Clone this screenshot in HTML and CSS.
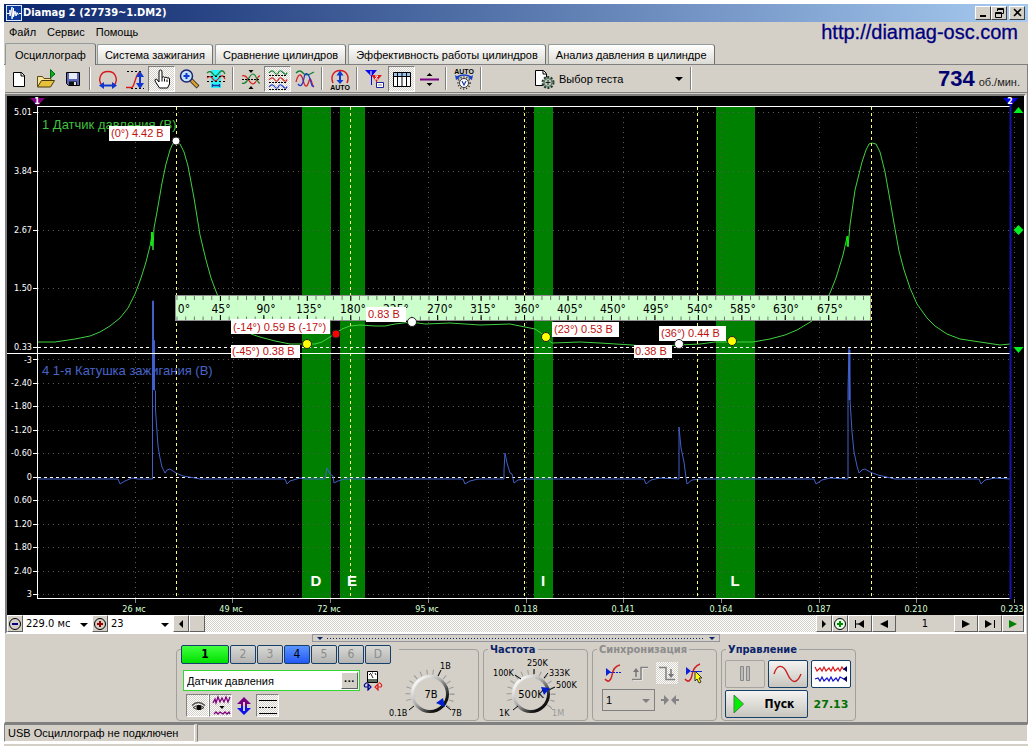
FILE: index.html
```html
<!DOCTYPE html>
<html lang="ru">
<head>
<meta charset="utf-8">
<title>Diamag 2 (27739~1.DM2)</title>
<link rel="stylesheet" href="styles.css">
</head>
<body>
<div class="window">
  <header class="titlebar">
    <svg class="app-icon" width="16" height="16" viewBox="0 0 16 16"><rect width="16" height="16" fill="#dfe8ff"/><rect x="1" y="1" width="14" height="14" fill="#0a3a9c"/><path d="M1 8.500h3V5v6l1-4 1-5v12l1.500-11v9L9 6l1 5 1-3.500 1 2 1-1h2" fill="none" stroke="#fff"/></svg>
    <h1 class="title">Diamag 2 (27739~1.DM2)</h1>
    <button class="win-btn" aria-label="Свернуть"><svg width="11" height="10" viewBox="0 0 11 10"><path d="M2 8h6" stroke="#000" stroke-width="2"/></svg></button>
    <button class="win-btn" aria-label="Восстановить"><svg width="11" height="10" viewBox="0 0 11 10"><path d="M3.500 3V.5h6v5H7.500M3 1.500h7M1.500 4.500h6v5h-6zM1 5.500h7" fill="none" stroke="#000"/></svg></button>
    <button class="win-btn close" aria-label="Закрыть"><svg width="11" height="10" viewBox="0 0 11 10"><path d="M2 1l7 7M9 1L2 8" stroke="#000" stroke-width="1.600"/></svg></button>
  </header>
  <div class="menu-row">
    <nav class="menu"><button>Файл</button><button>Сервис</button><button>Помощь</button></nav>
    <a class="site" href="http://diamag-osc.com">http://diamag-osc.com</a>
  </div>
  <nav class="tabs">
    <button class="tab active">Осциллограф</button><button class="tab">Система зажигания</button><button class="tab">Сравнение цилиндров</button><button class="tab">Эффективность работы цилиндров</button><button class="tab">Анализ давления в цилиндре</button>
  </nav>
  <main class="page">
    <div class="toolbar">
      <button class="tool" aria-label="Новый"><svg width="24" height="22" viewBox="0 0 24 22"><path d="M6.500 4.500h8l3 3v11h-11z" fill="#fff" stroke="#000"/><path d="M14 4v4h4" fill="none" stroke="#000"/></svg></button>
      <button class="tool" aria-label="Открыть"><svg width="24" height="22" viewBox="0 0 24 22"><path d="M3.500 18V8.500h5l1.500 2h7V13" fill="#f6e59a" stroke="#5c4a10"/><path d="M3.500 19L7.500 12.500h13L16.500 19z" fill="#e8c13c" stroke="#4a3a08"/><path d="M16.500 10V1.500L21 6z" fill="#08b020" stroke="#056812"/></svg></button>
      <button class="tool" aria-label="Сохранить"><svg width="24" height="22" viewBox="0 0 24 22"><path d="M5.500 4.500h13v13h-11l-2-2z" fill="#5a66b8" stroke="#000"/><rect x="8" y="5" width="8" height="6" fill="#e8ecf4"/><path d="M8 13.500h8V17H8z" fill="#111"/><path d="M13 14h2v3h-2z" fill="#ddd"/></svg></button>
      <span class="sep"></span>
      <button class="tool" aria-label="Ширина"><svg width="24" height="22" viewBox="0 0 24 22"><path d="M6 17.500C1.500 12 4 3.500 12 3.500S22.500 12 18 17.500" fill="none" stroke="#d81818" stroke-width="1.400"/><path d="M5 17.500h14" stroke="#1038d0" stroke-width="2"/><path d="M3 17.500l5-3.500v7zM21 17.500L16 14v7z" fill="#1038d0"/></svg></button>
      <button class="tool" aria-label="Высота"><svg width="24" height="22" viewBox="0 0 24 22"><path d="M3 19.500h6c3-2 3.500-14 8-15.500h1" fill="none" stroke="#d81818" stroke-width="1.400"/><path d="M4 3.500h16M8 20.500h13" stroke="#000" stroke-dasharray="2 2"/><path d="M17 6v12" stroke="#1038d0" stroke-width="2"/><path d="M17 3l4 6h-8zM17 21l-4-6h8z" fill="#1038d0"/></svg></button>
      <button class="tool pressed" aria-label="Рука"><svg width="24" height="22" viewBox="0 0 24 22"><path d="M9 14V4q0-2 1.500-2T12 4v5.500q2-1.500 2.500 0 2-1 2.500.5 2.500-.8 2.500 1V16l-2 4h-8L5 13q-.5-2 1.500-2z" fill="#fff" stroke="#000"/><path d="M12 9.500v4M14.500 10.500v3M17 11.500V14" stroke="#000"/></svg></button>
      <button class="tool" aria-label="Масштаб"><svg width="24" height="22" viewBox="0 0 24 22"><path d="M14 12l7 7" stroke="#222" stroke-width="4"/><path d="M14 12l6.500 6.500" stroke="#d8a030" stroke-width="2.500"/><circle cx="9.500" cy="8" r="6" fill="#c5e3f6" stroke="#1c2474" stroke-width="1.500"/><path d="M9.500 5v6M6.500 8h6" stroke="#1038d0" stroke-width="2"/></svg></button>
      <button class="tool" aria-label="Область"><svg width="24" height="22" viewBox="0 0 24 22"><path d="M7 2h10v18H7z" fill="#2af2f8"/><path d="M3 5q3.500-3 6 1t6-1 6 1" fill="none" stroke="#168030" stroke-width="1.300"/><path d="M3 10q3.500-3 6 1t6-1 6 1" fill="none" stroke="#d82020" stroke-width="1.300"/><path d="M3 8.500h18M3 13.500h18" stroke="#000" stroke-dasharray="2 2"/><path d="M8 17.500h8M8.500 16v3M15.500 16v3" stroke="#1038a0" stroke-width="1.300"/></svg></button>
      <span class="sep"></span>
      <button class="tool" aria-label="Совместить"><svg width="24" height="22" viewBox="0 0 24 22"><path d="M3 8c5-3 7 8 11 8s4-9 7-8" fill="none" stroke="#d82020" stroke-width="1.200"/><path d="M3 15c5 3 7-9 11-9s4 10 7 9" fill="none" stroke="#168030" stroke-width="1.200"/><path d="M3 11.500h18" stroke="#000" stroke-dasharray="2 1"/><path d="M9.500 2h5L12 5zM9.500 21h5L12 18z" fill="#000"/></svg></button>
      <button class="tool pressed" aria-label="Разделить"><svg width="24" height="22" viewBox="0 0 24 22"><g fill="none" stroke-width="1.200"><path d="M3 5q3-4 5.500-.5t4 0 4.500 0 4 0" stroke="#168030"/><path d="M3 12q3-4 5.500-.5t4 0 4.500 0 4 0" stroke="#d82020"/><path d="M3 19q3-4 5.500-.5t4 0 4.500 0 4 0" stroke="#2038d0"/></g><path d="M3 7.500h18M3 14.500h18M3 21.500h18" stroke="#000" stroke-dasharray="2 1"/></svg></button>
      <button class="tool" aria-label="Наложить"><svg width="24" height="22" viewBox="0 0 24 22"><g fill="none" stroke-width="1.300"><path d="M3 5q4-4 7 0t11-1" stroke="#168030"/><path d="M3 14c2-8 5-10 7-2s4 8 6 1 3 6 5 6" stroke="#d82020"/><path d="M5 16c3 4 5 0 6-6s4-6 6 1 2 8 4 7" stroke="#2038d0"/></g></svg></button>
      <span class="sep"></span>
      <button class="tool" aria-label="Авто"><svg width="24" height="22" viewBox="0 0 24 22"><path d="M5 15C2 8 6 2.500 12 2.500S22 8 19 15" fill="none" stroke="#d81818" stroke-width="1.400"/><path d="M12 5v9" stroke="#1038d0" stroke-width="2"/><path d="M12 2.500l3.500 5h-7zM12 16l-3.500-4h7z" fill="#1038d0"/><text x="12" y="21.500" class="icon-text">AUTO</text></svg></button>
      <span class="sep"></span>
      <button class="tool" aria-label="Маркеры"><svg width="24" height="22" viewBox="0 0 24 22"><path d="M2 2h12L9 8v9H8V8z" fill="#0808f0"/><path d="M8 7h11l-5 6v4h-1v-4z" fill="#e01818"/><path d="M8 3v4" stroke="#fff"/><path d="M12 8h3l-3 3h3" stroke="#fff" fill="none"/><path d="M13.500 14.500h7v5h-7z" fill="#fff" stroke="#2020a0"/><path d="M15 17h4" stroke="#888"/></svg></button>
      <button class="tool pressed" aria-label="Таблица"><svg width="24" height="22" viewBox="0 0 24 22"><path d="M3.500 4.500h17v14h-17z" fill="#fff" stroke="#000"/><path d="M4 5h16v3H4z" fill="#9bc4ec"/><path d="M3 8.500h18M7.500 5v13M12 5v13M16.500 5v13" stroke="#000"/></svg></button>
      <button class="tool" aria-label="Линейка"><svg width="24" height="22" viewBox="0 0 24 22"><path d="M3 11.500h19" stroke="#780080" stroke-width="2"/><path d="M9.500 8h6l-3-3zM9.500 15h6l-3 3z" fill="#000"/></svg></button>
      <span class="sep"></span>
      <button class="tool" aria-label="Авторазвёртка"><svg width="24" height="22" viewBox="0 0 24 22"><text x="12" y="5.500" class="icon-text">AUTO</text><path d="M5 9q7-4 14 0" fill="none" stroke="#1840c0" stroke-width="1.500"/><path d="M3 7l1 5 4-2zM21 7l-1 5-4-2z" fill="#1840c0"/><circle cx="12" cy="15" r="6" fill="none" stroke="#222" stroke-width="1.500" stroke-dasharray="1 2"/><circle cx="12" cy="15" r="4.500" fill="#fff" stroke="#333"/><path d="M10 13l2 4 2-4" fill="none" stroke="#2038b0" stroke-width="1.200"/></svg></button>
      <span class="sep"></span>
      <button class="test-select"><svg width="24" height="22" viewBox="0 0 24 22"><path d="M3.500 2.500h8l3 3v12h-11z" fill="#fff" stroke="#000"/><path d="M11 3v3h3" fill="none" stroke="#000"/><circle cx="16" cy="14.500" r="5.500" fill="#a9bfae" stroke="#24382a" stroke-width="2" stroke-dasharray="2 1.500"/><circle cx="16" cy="14.500" r="4" fill="#bccdc0" stroke="#516a58"/><path d="M16 12v5M13.500 14.500h5" stroke="#222"/></svg><span>Выбор теста</span><i class="caret"></i></button>
      <span class="sep"></span>
      <p class="rpm"><strong>734</strong> об./мин.</p>
    </div>
    <section class="scope">
      <svg class="chart" viewBox="7 96 1017 519" role="img" aria-label="Осциллограмма">
        <rect x="7" y="96" width="1017" height="519" fill="#000"/>
        <g fill="#008000"><path d="M302 107h29v491h-29zM340 107h25v491h-25zM534 107h19v491h-19zM716 107h39v491h-39z"/></g>
        <g class="grid">
          <path d="M38 112.500h972M38 171.500h972M38 230.500h972M38 288.500h972M38 359.500h972M38 383.500h972M38 406.500h972M38 430.500h972M38 453.500h972M38 500.500h972M38 524.500h972M38 547.500h972M38 571.500h972M38 594.500h972"/>
          <path d="M135.500 112v486M232.500 112v486M330.500 112v486M428.500 112v486M526.500 112v486M623.500 112v486M721.500 112v486M819.500 112v486M916.500 112v486M1014.500 112v486"/>
        </g>
        <path d="M38 347.500h972M38 477.500h972" stroke="#fff" stroke-dasharray="3 3"/>
        <text class="name ch1" x="42" y="129">1 Датчик давления (В)</text>
        <text class="name ch4" x="42" y="375">4 1-я Катушка зажигания (В)</text>
        <path class="wave" stroke="#40d040" d="M38 342L55 342 75 339 90 336 100 332 110 326 120 318 128 308 135 294 141 278 146 262 150 246 152 235 153 250 154 228 157 212 162 183 166 164 170 150 173 143 176 141 180 144 184 152 188 166 194 198 200 235 206 260 211 278 217 294 226 311 235 322 251 334 260 337 275 341 290 344 307 344 315 344 322 342 330 337 336 333 342 329 350 326 360 325 375 326 385 326 395 324 411 322 425 324 450 323 480 325 510 324 525 327 535 329 541 333 546 338 552 343 580 342 600 343 632 345 650 347 679 345 700 344 715 342 733 342 753 342 770 339 785 335 797 330 812 321 823 306 830 293 836 278 843 255 847 237 848 247 850 225 855 190 862 162 866 150 869 144 872 143 876 144 880 152 885 172 890 200 895 229 899 251 904 270 910 288 917 304 927 318 935 326 947 334 960 339 980 342 1000 345 1010 344"/>
        <path d="M152 232v14M847.500 236v10" stroke="#00f000" stroke-width="2"/>
        <path class="wave" stroke="#4060c8" d="M38 479H118L120 484 125 481 132 478 138 479H152.500V301L153.500 301V340L154.500 341V390L155.500 391V410L157 432 158 446 160 458 162 467 165 473 167 470 170 469 173 471 176 473 183 476 195 478 200 479H285L287 484 290 481 300 478 305 479H325L327 468 330 474 333 476 334 483 338 481 345 479H463L465 484 470 481 478 479H504V470L505 453 507 463 510 473 512 474 514 483 518 480 525 479H644L646 484 651 480 660 478 679 479V427L681 448 684 462 686 478 687 484 692 480 700 479H814L816 484 822 480 830 478 848 479V390L849 348 850 400 852 432 854 452 857 466 859 473 862 470 865 469 870 472 878 475 895 479H979L981 484 985 480 995 478 1010 479"/>
        <path d="M153.500 340v50M849.500 350v50" stroke="#4060d0" stroke-width="2"/>
        <path d="M176.500 107v491M350.500 107v491M524.500 107v491M697.500 107v491M871.500 107v491" stroke="#ffff70" stroke-dasharray="3 3"/>
        <path d="M37 106.500h973M7 353.500h1003M37 598.500h973M33 112.500h4M33 171.500h4M33 230.500h4M33 288.500h4M33 347.500h4M33 359.500h4M33 383.500h4M33 406.500h4M33 430.500h4M33 453.500h4M33 477.500h4M33 500.500h4M33 524.500h4M33 547.500h4M33 571.500h4M33 594.500h4M37.500 106v493" stroke="#fff" stroke-width="1"/>
        <path d="M135.500 599v4M232.500 599v4M330.500 599v4M428.500 599v4M526.500 599v4M623.500 599v4M721.500 599v4M819.500 599v4M916.500 599v4M1014.500 599v4" stroke="#888"/>
        <path d="M1010.500 104v495" stroke="#1414a8" stroke-width="2"/>
        <path d="M30 98h15l-7.500 8z" fill="#800080"/><path d="M1003 98h15l-7.500 8z" fill="#0000e0"/>
        <text class="marker" x="37" y="104">1</text><text class="marker" x="1010" y="104">2</text>
        <path d="M1018.500 107l5 6h-10zM1018.500 225l5 5-5 5-5-5zM1013.500 347h10l-5 6z" fill="#00f020"/>
        <g class="ylab"><text x="32" y="115">5.01</text><text x="32" y="174">3.84</text><text x="32" y="233">2.67</text><text x="32" y="291">1.50</text><text x="32" y="350">0.33</text><text x="32" y="363">-3</text><text x="32" y="386">-2.40</text><text x="32" y="409">-1.80</text><text x="32" y="433">-1.20</text><text x="32" y="456">-0.60</text><text x="32" y="480">0</text><text x="32" y="503">0.60</text><text x="32" y="527">1.20</text><text x="32" y="550">1.80</text><text x="32" y="574">2.40</text><text x="32" y="597">3</text></g>
        <g class="xlab"><text x="134" y="612">26 мс</text><text x="231" y="612">49 мс</text><text x="329" y="612">72 мс</text><text x="427" y="612">95 мс</text><text x="526" y="612">0.118</text><text x="623" y="612">0.141</text><text x="721" y="612">0.164</text><text x="819" y="612">0.187</text><text x="916" y="612">0.210</text><text x="1012" y="612">0.233</text></g>
        <g class="zone"><text x="316" y="586">D</text><text x="352" y="586">E</text><text x="543" y="586">I</text><text x="735" y="586">L</text></g>
        <rect x="175.500" y="295.500" width="695" height="25" fill="#ccffcc" stroke="#909090"/>
        <path d="M176.500 298H870M176.500 318.500H870" stroke="#777" stroke-width="4" stroke-dasharray="1 7.690"/>
        <path d="M219.900 298.500H870M219.900 317.500H870" stroke="#000" stroke-width="5" stroke-dasharray="1 42.450"/>
        <g class="deg"><text x="184" y="313">0°</text><text x="221" y="313">45°</text><text x="266" y="313">90°</text><text x="309" y="313">135°</text><text x="353" y="313">180°</text><text x="396" y="313">225°</text><text x="440" y="313">270°</text><text x="483" y="313">315°</text><text x="527" y="313">360°</text><text x="570" y="313">405°</text><text x="613" y="313">450°</text><text x="656" y="313">495°</text><text x="700" y="313">540°</text><text x="743" y="313">585°</text><text x="786" y="313">630°</text><text x="830" y="313">675°</text></g>
        <path d="M109 126h61v15h-61zM231 319h99v15h-99zM231 345h69v13h-69zM366 307h40v15h-40zM552 322h67v15h-67zM659 326h67v15h-67zM634 345h38v13h-38z" fill="#fff"/>
        <g class="val"><text x="111" y="137">(0°) 4.42 В</text><text x="233" y="331">(-14°) 0.59 В (-17°)</text><text x="232" y="355">(-45°) 0.38 В</text><text x="368" y="318">0.83 В</text><text x="554" y="333">(23°) 0.53 В</text><text x="661" y="337">(36°) 0.44 В</text><text x="635" y="355">0.38 В</text></g>
        <g stroke="#222"><circle cx="176" cy="141" r="4" fill="#fff"/><circle cx="412" cy="322" r="4.500" fill="#fff"/><circle cx="679" cy="344" r="4.500" fill="#fff"/><circle cx="307" cy="344" r="4.500" fill="#ff0"/><circle cx="546" cy="337" r="4.500" fill="#ff0"/><circle cx="732" cy="341" r="4.500" fill="#ff0"/><circle cx="336" cy="334" r="4" fill="#f00"/></g>
      </svg>
      <div class="scrollrow">
        <button class="sq" aria-label="Уменьшить"><svg width="14" height="14" viewBox="0 0 14 14"><circle cx="7" cy="7" r="5.500" fill="none" stroke="#000"/><path d="M4 7h6" stroke="#000080" stroke-width="2"/></svg></button>
        <span class="combo time"><select aria-label="Время"><option>229.0 мс</option></select></span>
        <button class="sq" aria-label="Увеличить"><svg width="14" height="14" viewBox="0 0 14 14"><circle cx="7" cy="7" r="5.500" fill="none" stroke="#000"/><path d="M4 7h6M7 4v6" stroke="#900" stroke-width="2"/></svg></button>
        <span class="combo count"><select aria-label="Деление"><option>23</option></select></span>
        <button class="sq" aria-label="Влево"><svg width="14" height="14" viewBox="0 0 14 14"><path d="M9 3v8L5 7z"/></svg></button>
        <button class="sq" aria-label="Ползунок"></button>
        <span class="track"></span>
        <button class="sq" aria-label="Вправо"><svg width="14" height="14" viewBox="0 0 14 14"><path d="M5 3v8l4-4z"/></svg></button>
        <button class="sq" aria-label="Добавить"><svg width="14" height="14" viewBox="0 0 14 14"><circle cx="7" cy="7" r="5.500" fill="#e8ffe8" stroke="#000"/><path d="M4 7h6M7 4v6" stroke="#080" stroke-width="2"/></svg></button>
        <button class="nav" aria-label="В начало"><svg width="14" height="14" viewBox="0 0 14 14"><path d="M2 3h1v8H2zM11 3v8L5 7z"/><path d="M3 6.500h3v1H3z"/></svg></button>
        <button class="nav" aria-label="Назад"><svg width="14" height="14" viewBox="0 0 14 14"><path d="M11 3v8L3 7z"/></svg></button>
        <output class="frame-no">1</output>
        <button class="nav" aria-label="Вперёд"><svg width="14" height="14" viewBox="0 0 14 14"><path d="M3 3v8l8-4z"/></svg></button>
        <button class="nav" aria-label="В конец"><svg width="14" height="14" viewBox="0 0 14 14"><path d="M11 3h1v8h-1zM2 3v8l7-4z"/></svg></button>
        <button class="nav last" aria-label="Воспроизвести"><svg width="14" height="14" viewBox="0 0 14 14"><path d="M3 3v8l8-4z" fill="#008000"/></svg></button>
      </div>
    </section>
    <div class="splitter"><i class="caret navy"></i><span class="dots"></span><i class="caret navy"></i></div>
    <section class="panels">
      <fieldset class="group channels">
        <legend class="chan-row"><button class="chan c1">1</button><button class="chan">2</button><button class="chan">3</button><button class="chan c4">4</button><button class="chan">5</button><button class="chan">6</button><button class="chan">D</button></legend>
        <div class="chan-body">
          <div class="chan-left">
            <div class="name-row">
              <span class="sensor"><input aria-label="Датчик" value="Датчик давления"><button aria-label="Выбрать">···</button></span>
              <svg width="20" height="21" viewBox="0 0 20 21"><path d="M4.500 1.500h10v11h-10z" fill="#fff" stroke="#000"/><path d="M5 9h9v3H5z" fill="#5d6d5d"/><path d="M6 5l2-2M9 3h1M12 3l1 2M8 4l2 4" stroke="#222" fill="none"/><path d="M4 12.500q-4 2-2 4.500h4M5 14v6l3-3z" fill="none" stroke="#000090" stroke-width="1.200"/><path d="M16 12.500q4 2 2 4.500h-4M15 14v6l-3-3z" fill="none" stroke="#e02020" stroke-width="1.200"/></svg>
            </div>
            <div class="mode-row">
              <button class="mode on" aria-label="Показать"><svg width="22" height="22" viewBox="0 0 22 22"><path d="M5 10.500q6-6 13 0" fill="none" stroke="#555" stroke-width="1.500"/><path d="M6 12.500q6-4 11 0-5 4-11 0" fill="#ddd" stroke="#333"/><circle cx="12" cy="12.500" r="2.500"/></svg></button>
              <button class="mode on" aria-label="Фильтр"><svg width="22" height="22" viewBox="0 0 22 22"><path d="M3 8l2-4 1 4 2-6 2 5 2-4 2 4 2-5 2 5 2-5M4 19l2-2 2 2 2-2 3 2 2-2 2 2 2-2 1 2" fill="none" stroke="#800080" stroke-width="1.300"/><path d="M9.500 11h5l-2.500 3z"/></svg></button>
              <button class="mode" aria-label="Инверсия"><svg width="22" height="22" viewBox="0 0 22 22"><path d="M11 2l7 7h-4v3H8V9H4z" fill="#780080"/><path d="M11 20l7-7h-4v-2H8v2H4z" fill="#1010e8"/><path d="M11 7v9" stroke="#d4d0c8" stroke-width="2"/></svg></button>
              <button class="mode on" aria-label="Уровни"><svg width="22" height="22" viewBox="0 0 22 22"><path d="M2 5.500h18M2 18.500h18" stroke="#000"/><path d="M2 12.500h18" stroke="#000" stroke-dasharray="2 1"/></svg></button>
            </div>
          </div>
          <svg class="knob" width="86" height="62" viewBox="386 657 86 62">
            <g id="dial"><circle cx="428" cy="694" r="22" fill="none" stroke="#999" stroke-width="5" stroke-dasharray="1 5.250" pathLength="138"/><path d="M404 702l2 10 9 9h26l10-12z" fill="#d4d0c8"/>
            <circle cx="428" cy="694" r="17.500" fill="#d4d0c8" stroke="url(#rim)" stroke-width="3"/></g>
            <defs><linearGradient id="rim" x1="0" y1="0" x2="1" y2="1"><stop offset=".1" stop-color="#fff"/><stop offset=".45" stop-color="#aaa"/><stop offset=".8" stop-color="#111"/></linearGradient></defs>
            <path d="M436 676l3-6M412 706l-5 4M444 706l5 4" stroke="#000"/><path d="M434 703l7-5 2 9z" fill="#0020d0"/>
            <text class="knob-val" x="429" y="698">7В</text>
            <g class="knob-lab"><text x="438" y="669">1В</text><text x="387" y="716">0.1В</text><text x="449" y="716">7В</text></g>
          </svg>
        </div>
      </fieldset>
      <fieldset class="group freq">
        <legend>Частота</legend>
        <svg class="knob" width="98" height="62" viewBox="487 657 98 62">
          <use href="#dial" x="103"/>
          <path d="M515 675l6 4M534 669v5M548 673l-4 5M555 687l-6 3M518 706l-5 4" stroke="#000"/><path d="M549 706l4 4" stroke="#999"/><path d="M541 687l9 1-6 7z" fill="#0020d0"/>
          <text class="knob-val" x="531" y="698">500K</text>
          <g class="knob-lab"><text x="527" y="666">250K</text><text x="493" y="676">100K</text><text x="549" y="676">333K</text><text x="556" y="688">500K</text><text x="499" y="716">1K</text><text x="552" y="716" fill="#999">1M</text></g>
        </svg>
      </fieldset>
      <fieldset class="group sync">
        <legend>Синхронизация</legend>
        <div class="sync-row">
          <button class="sync-btn" aria-label="Канал"><svg width="22" height="22" viewBox="0 0 22 22"><path d="M3 17c3 4 6 2 7-4s3-9 8-10" fill="none" stroke="#d02020" stroke-width="1.500"/><path d="M4 6v8l5-4z" fill="#1020d8"/><path d="M8 10.500h11" stroke="#1020d8" stroke-dasharray="2 1"/></svg></button>
          <button class="sync-btn" aria-label="Фронт"><svg width="22" height="22" viewBox="0 0 22 22"><path d="M4 18.500h9v-12h6" fill="none" stroke="#fff"/><path d="M3 17.500h9v-12h7" fill="none" stroke="#808080" stroke-width="1.500"/><path d="M7 8v7" stroke="#777" stroke-width="1.500"/><path d="M4 10l3-4 3 4z" fill="#777"/></svg></button>
          <button class="sync-btn on" aria-label="Спад"><svg width="22" height="22" viewBox="0 0 22 22"><path d="M3 5.500h7v12h9" fill="none" stroke="#808080" stroke-width="1.500"/><path d="M15 7v7" stroke="#777" stroke-width="1.500"/><path d="M12 12l3 4 3-4z" fill="#777"/></svg></button>
          <button class="sync-btn" aria-label="Выбор"><svg width="22" height="22" viewBox="0 0 22 22"><path d="M2 17c3 4 6 2 7-4s3-9 8-11" fill="none" stroke="#d02020" stroke-width="1.500"/><path d="M3 5v8l5-4z" fill="#1020d8"/><path d="M8 9.500h11" stroke="#1020d8"/><path d="M12 9l7 7h-3l2 4-2 1-2-4-2 2z" fill="#ff0" stroke="#333"/></svg></button>
        </div>
        <div class="sync-row two"><span class="combo sync-ch"><select aria-label="Канал синхронизации" disabled><option>1</option></select></span><svg width="18" height="12" viewBox="0 0 18 12"><path d="M0 5h3V1l5 5-5 5V7H0zM18 5h-3V1l-5 5 5 5V7h3z" fill="#848484"/></svg></div>
      </fieldset>
      <fieldset class="group control">
        <legend>Управление</legend>
        <div class="control-grid">
          <button class="xp off" aria-label="Пауза"><svg width="16" height="16" viewBox="0 0 16 16"><path d="M3.500.5h3v14h-3zM9.500.5h3v14h-3z" fill="#bbb" stroke="#888"/></svg></button>
          <button class="xp" aria-label="Синус"><svg width="32" height="22" viewBox="0 0 32 22"><path d="M2 11C5 1 11 1 15 10s9 13 14 1" fill="none" stroke="#c82020" stroke-width="1.400"/></svg></button>
          <button class="xp white" aria-label="Сигналы"><svg width="36" height="22" viewBox="0 0 36 22"><path d="M2 4l2 4 3-3 2 3 2-4 2 4 3-3 2 3 2-4 2 4 3-3 2 3 2-4 2 3" fill="none" stroke="#d81818" stroke-width="1.200"/><path d="M2 16l3-1 2 3 2-4 2 4 3-3 2 3 2-4 2 4 3-3 2 3 2-4 4 2" fill="none" stroke="#1010c8" stroke-width="1.200"/><path d="M34 3v6l-4-3zM34 13v6l-4-3z" fill="#000060"/></svg></button>
          <button class="xp start"><svg width="12" height="20" viewBox="0 0 12 20"><path d="M1 1l9.500 9L1 19z" fill="#00f000" stroke="#4b804b"/></svg><span>Пуск</span></button>
          <output class="elapsed">27.13</output>
        </div>
      </fieldset>
    </section>
  </main>
  <footer class="status"><span class="msg">USB Осциллограф не подключен</span><span class="rest"></span></footer>
</div>
</body>
</html>
```
FILE: styles.css
```css
* { box-sizing: border-box; }
body { margin: 0; padding: 4px 4px 0; background: #fff; color: #000; font: 11px/14px "Liberation Sans", Arial, sans-serif; }
button, select, input { margin: 0; padding: 0; border: 0; border-radius: 0; background: none; color: inherit; font: inherit; }
button { display: inline-flex; align-items: center; justify-content: center; flex: none; }
svg { display: block; flex: none; }
.window { background: #d4d0c8; min-height: 742px; display: flex; flex-direction: column; }

.titlebar { height: 18px; display: flex; align-items: center; padding: 0 3px 0 2px; background: linear-gradient(90deg, #0a246a, #a6caf0); }
.title { flex: 1; margin: 0 0 0 1px; color: #fff; font: bold 11px/16px "DejaVu Sans Condensed", "DejaVu Sans", sans-serif; }
.win-btn { width: 16px; height: 14px; background: #d4d0c8; border: 1px solid; border-color: #fff #404040 #404040 #fff; }
.close { margin-left: 2px; }

.menu-row { height: 21px; display: flex; justify-content: space-between; }
.menu { display: flex; gap: 11px; padding: 0 0 2px 5px; }
.site { margin-right: 10px; color: #000080; font: 20px/20px "Liberation Sans", Arial, sans-serif; text-decoration: none; -webkit-text-stroke: 0.3px #000080; }

.tabs { height: 22px; display: flex; align-items: flex-end; gap: 2px; padding-left: 1px; border-bottom: 1px solid #808080; }
.tab { height: 20px; padding: 0 7px; background: linear-gradient(#fff, #dcdad4); border: 1px solid #919b9c; border-right-color: #707070; border-bottom: 0; border-radius: 2px 3px 0 0; }
.tab.active { height: 22px; padding: 0 9px; margin: 0 -1px -1px 0; background: #d4d0c8; }

.page { border: 1px solid #fff; border-width: 0 1px; border-right-color: #808080; border-bottom: 2px solid #808080; flex: 1; }
.toolbar { height: 28px; display: flex; align-items: center; border-bottom: 1px solid #808080; }
.tool { width: 27px; height: 26px; }
.pressed, .on { border: 1px solid; border-color: #808080 #fff #fff #808080; background: repeating-conic-gradient(#fff 0 25%, #d4d0c8 0 50%) 0 0 / 2px 2px; }
.sep { width: 2px; height: 23px; margin: 0 3px; background: linear-gradient(90deg, #808080 50%, #fff 50%); flex: none; }
.icon-text { font: bold 7px "Liberation Sans", sans-serif; text-anchor: middle; }
.test-select { width: 155px; margin-left: 47px; justify-content: flex-start; gap: 3px; }
.caret { width: 0; height: 0; border: 4px solid transparent; border-top-color: #000; border-bottom: 0; flex: none; }
.test-select .caret { margin: 0 4px 0 auto; }
.rpm { margin: 0 7px 0 auto; color: #222; display: flex; align-items: baseline; gap: 4px; }
.rpm strong { color: #000070; font: bold 22px/26px "Liberation Sans", Arial, sans-serif; }

.scope { border: 2px solid; border-color: #808080 #fff #fff #808080; margin: 1px 1px 0 0; }
.chart { width: 100%; height: auto; }
.grid { stroke: #585858; stroke-dasharray: 1 4; }
.wave { fill: none; stroke-width: 1; }
.name { font: 13px "Liberation Sans", Arial, sans-serif; }
.ch1 { fill: #40c040; }
.ch4 { fill: #4864c8; }
.marker { fill: #fff; font: bold 8px "DejaVu Sans", sans-serif; text-anchor: middle; }
.ylab { fill: #fff; font: 9px "DejaVu Sans Condensed", sans-serif; text-anchor: end; }
.xlab { fill: #d4ffd4; font: 9px "DejaVu Sans Condensed", sans-serif; text-anchor: middle; }
.zone { fill: #fff; font: bold 15px "Liberation Sans", Arial, sans-serif; text-anchor: middle; }
.deg { font: 12px "DejaVu Sans Condensed", sans-serif; text-anchor: middle; }
.val { fill: #c01010; font: 11px "Liberation Sans", Arial, sans-serif; }

.scrollrow { height: 17px; display: flex; background: #d4d0c8; font-family: "DejaVu Sans Condensed", "DejaVu Sans", sans-serif; }
.sq, .nav { width: 16px; background: #d4d0c8; border: 1px solid; border-color: #fff #606060 #606060 #fff; }
.nav { width: 24px; }
.nav.last { width: 22px; }
.combo { position: relative; display: flex; background: #fff; }
.combo::after { content: ""; position: absolute; right: 4px; top: 50%; border: 4px solid transparent; border-top-color: #000; border-bottom: 0; margin-top: -1px; pointer-events: none; }
.combo select { appearance: none; width: 100%; padding-left: 3px; opacity: 1; color: #000; }
.time { width: 69px; }
.count { width: 65px; }
.track { flex: 1; background: repeating-conic-gradient(#fff 0 25%, #d4d0c8 0 50%) 0 0 / 2px 2px; }
.frame-no { width: 58px; text-align: center; line-height: 17px; }

.splitter { width: 408px; height: 8px; margin: 0 auto; display: flex; align-items: center; gap: 4px; padding: 0 4px; border: 1px solid #9494a0; }
.navy { border-top-color: #0a246a; border-width: 3px 3px 0; }
.dots { flex: 1; height: 1px; background: repeating-linear-gradient(90deg, #0a246a 0 1px, transparent 1px 3px); }

.panels { display: flex; align-items: flex-start; gap: 4px; padding: 3px 0 1px 171px; }
.group { height: 76px; margin: 0; padding: 0; min-width: 0; border: 1px solid #a0a09c; border-radius: 4px; }
.group legend { margin-left: 4px; padding: 0 2px; color: #0a246a; font: bold 11px/9px "DejaVu Sans Condensed", "DejaVu Sans", sans-serif; }
.group .chan-row { display: flex; align-items: flex-start; gap: 1px; height: 9px; width: 218px; padding: 0; }
.channels { width: 303px; }
.freq { width: 105px; }
.sync { width: 125px; }
.control { width: 135px; }
.chan { width: 26px; height: 19px; color: #8c8c8c; background: linear-gradient(#d8d8d4, #b4b4b4); border: 1px solid #16406c; border-radius: 2px; font-weight: normal; font-size: 12px; }
.c1 { width: 48px; color: #000; background: linear-gradient(#40ff40, #00e000); font-weight: bold; }
.c4 { color: #000; background: linear-gradient(#5c94ff, #2458f4); }
.chan-body { display: flex; justify-content: space-between; padding: 0 4px 0 6px; }
.chan-left { padding-top: 16px; }
.name-row { display: flex; gap: 3px; }
.sensor { display: flex; width: 177px; height: 21px; padding: 1px; background: #fff; border: 1px solid #30d830; }
.sensor input { flex: 1; min-width: 0; padding-left: 2px; }
.sensor button { width: 17px; background: #d4d0c8; border: 1px solid; border-color: #fff #606060 #606060 #fff; font-weight: bold; }
.mode-row { display: flex; padding: 3px 0 0 3px; }
.mode { width: 23px; height: 23px; }
.mode:last-child { margin-left: 1px; }
.knob { margin-top: 3px; }
.knob-val { font: 11px "DejaVu Sans Condensed", sans-serif; text-anchor: middle; }
.knob-lab { font: 9px "DejaVu Sans Condensed", sans-serif; }
.freq .knob { margin-left: 3px; }
.group.sync legend { color: #8c8c8c; }
.sync-row { display: flex; gap: 5px; padding: 8px 0 0 9px; }
.sync-btn { width: 22px; height: 22px; }
.sync-btn.on { border: 0; }
.two { align-items: center; gap: 6px; padding-top: 5px; }
.sync-ch { width: 53px; height: 22px; background: none; border: 1px solid #808080; }
.sync-ch::after { border-top-color: #808080; }
.control-grid { display: grid; grid-template-columns: 40px 40px 40px; gap: 2px 3px; padding: 6px 3px 0; }
.xp { height: 28px; background: linear-gradient(#f4f3f0, #c8c5be); border: 1px solid #16406c; border-radius: 2px; }
.off { background: none; border-color: #a4a4a0; }
.white { background: #fff; }
.start { grid-column: 1 / 3; gap: 20px; padding-right: 6px; font: bold 12px "DejaVu Sans Condensed", "DejaVu Sans", sans-serif; }
.elapsed { align-self: center; color: #007000; font: bold 11px "DejaVu Sans", sans-serif; text-align: center; }

.status { height: 20px; display: flex; gap: 2px; border-bottom: 2px solid #fff; margin-bottom: 2px; }
.msg, .rest { border: 1px solid; border-color: #808080 #fff #fff #808080; line-height: 16px; }
.msg { width: 191px; padding-left: 3px; }
.rest { flex: 1; }
```
